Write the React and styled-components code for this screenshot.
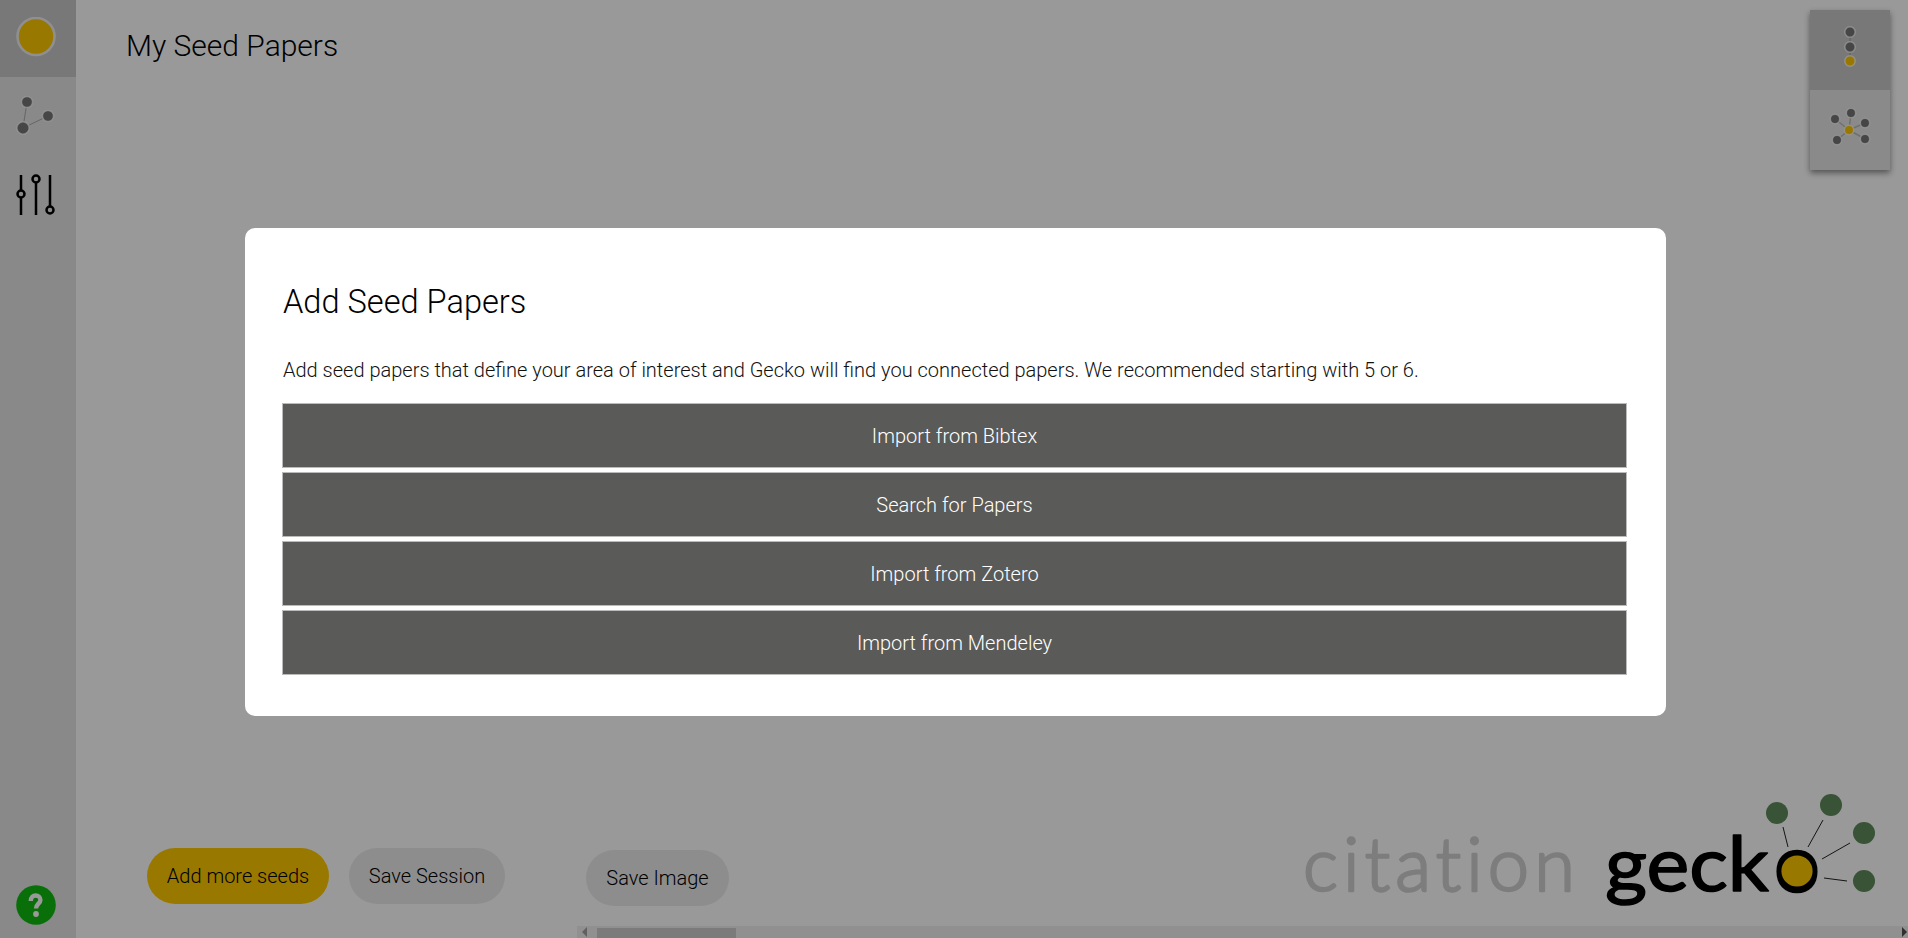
import styled, { createGlobalStyle } from 'styled-components'

const GlobalStyle = createGlobalStyle`
  html, body {
    margin: 0;
    height: 100%;
    overflow: hidden;
    font-family: Roboto, "Liberation Sans", sans-serif;
  }
  * { box-sizing: border-box; }
`

const Page = styled('div')`
  display: flex;
  width: 1908px;
  height: 938px;
  background: #fff;
`

const Sidebar = styled('nav')`
  display: flex;
  flex-direction: column;
  align-items: stretch;
  flex: 0 0 76px;
  background: #e4e4e4;
`

const NavItem = styled('div')`
  display: flex;
  align-items: center;
  justify-content: center;
  height: ${({ height = 77 }) => height}px;
  background: ${({ active }) => (active ? '#c8c8c8' : 'transparent')};
`

const HelpSlot = styled('div')`
  display: flex;
  justify-content: center;
  margin-top: auto;
  padding: 0 5px 13px 0;
`

const SeedPanel = styled('section')`
  display: flex;
  flex-direction: column;
  flex: 0 0 501px;
  padding: 27px 0 34px 50px;
`

const PageTitle = styled('h1')`
  margin: 0;
  font-size: 30px;
  line-height: 38px;
  font-weight: 300;
  color: #000;
`

const ButtonRow = styled('div')`
  display: flex;
  gap: 20px;
  margin-top: auto;
  margin-left: 21px;
`

const Pill = styled('div')`
  display: flex;
  align-items: center;
  justify-content: center;
  height: 56px;
  width: ${({ width }) => width}px;
  border-radius: 28px;
  font-size: 20px;
  font-weight: 300;
  color: #000;
  background: ${({ primary }) => (primary ? '#ffc800' : '#ececec')};
`

const GraphPanel = styled('section')`
  position: relative;
  display: flex;
  flex-direction: column;
  flex: 1;
`

const GraphBody = styled('div')`
  flex: 1;
  display: flex;
  align-items: flex-end;
  padding: 0 0 20px 9px;
`

const Scrollbar = styled('div')`
  display: flex;
  align-items: center;
  height: 12px;
  background: #f0f0f0;
`

const ScrollArrow = styled('div')`
  width: 0;
  height: 0;
  margin-left: ${({ right }) => (right ? 'auto' : '5px')};
  margin-right: ${({ right }) => (right ? '1px' : '0')};
  border-top: 5px solid transparent;
  border-bottom: 5px solid transparent;
  ${({ right }) => (right ? 'border-left: 5px solid #505050;' : 'border-right: 5px solid #a0a0a0;')}
`

const ScrollThumb = styled('div')`
  width: 139px;
  height: 10px;
  margin: 2px 0 0 10px;
  background: #cdcdcd;
`

const ViewToggle = styled('div')`
  position: absolute;
  top: 10px;
  right: 18px;
  display: flex;
  flex-direction: column;
  width: 80px;
  box-shadow: 0 3px 6px rgba(0, 0, 0, 0.45);
`

const ToggleItem = styled('div')`
  display: flex;
  align-items: center;
  justify-content: center;
  height: 80px;
  background: ${({ active }) => (active ? '#c8c8c8' : '#e6e6e6')};
`

const Logo = styled('svg')`
  position: absolute;
  right: 0;
  bottom: 12px;
  display: block;
  font-variant-ligatures: none;
`

const Overlay = styled('div')`
  position: fixed;
  inset: 0;
  padding: 228px 0 0 245px;
  background: rgba(0, 0, 0, 0.4);
`

const Modal = styled('div')`
  width: 1421px;
  height: 488px;
  padding: 54px 39px 0 38px;
  border-radius: 10px;
  background: #fff;
`

const ModalTitle = styled('h2')`
  margin: 0;
  font-size: 32.6px;
  line-height: 40px;
  font-weight: 300;
  color: #000;
`

const ModalText = styled('p')`
  margin: 34px 0 0;
  font-size: 20px;
  line-height: 28px;
  font-weight: 300;
  color: #111;
`

const ImportList = styled('div')`
  display: flex;
  flex-direction: column;
  gap: 4px;
  margin: 19px 0 0 -1px;
`

const ImportButton = styled('div')`
  display: flex;
  align-items: center;
  justify-content: center;
  height: 65px;
  background: #5a5a58;
  border: 1px solid #bbb;
  font-size: 20px;
  font-weight: 300;
  color: #fff;
`

const Node = ({ x, y, r = 5, fill = '#757575', ring = '#fff' }) => (
  <circle cx={x} cy={y} r={r} fill={fill} stroke={ring} strokeOpacity='0.75' strokeWidth='1.5' />
)

const SeedDot = () => (
  <svg width='44' height='44' viewBox='0 0 44 44'>
    <circle cx='20' cy='19.5' r='18.5' fill='#ffc800' stroke='#efefef' strokeWidth='2.6' />
  </svg>
)

const NetworkIcon = () => (
  <svg width='44' height='50' viewBox='0 0 44 50'>
    <path d='M11 13 L7 39 M7 39 L32 27' stroke='#aaa' strokeWidth='1' fill='none' />
    <Node x={11} y={13} r={5.6} />
    <Node x={32} y={27} r={5.6} />
    <Node x={7} y={39} r={6.2} />
  </svg>
)

const SlidersIcon = () => (
  <svg width='44' height='50' viewBox='0 0 44 50' fill='none' stroke='#000' strokeWidth='2.5'>
    <path d='M5 5V20M5 28V45M20 13V45M34 5V36' />
    <circle cx='5' cy='24' r='3.5' />
    <circle cx='20' cy='9' r='3.5' />
    <circle cx='34' cy='40' r='3.5' />
  </svg>
)

const HelpIcon = () => (
  <svg width='40' height='40' viewBox='0 0 40 40'>
    <circle cx='20' cy='20' r='19.8' fill='#10ba10' />
    <path d='M14.8 16 C14.8 12 17 10.5 19.6 10.5 C22.5 10.5 24.4 12.5 24.4 15 C24.4 18.5 20 19 20 23.5' fill='none' stroke='#fff' strokeWidth='4.4' />
    <circle cx='20' cy='29' r='2.9' fill='#fff' />
  </svg>
)

const ChainIcon = () => (
  <svg width='24' height='50' viewBox='0 0 24 50'>
    <path d='M12 8V39' stroke='#aaa' strokeWidth='1.5' />
    <Node x={12} y={7} r={5.2} />
    <Node x={12} y={22} r={5.2} />
    <Node x={12} y={36} r={5.2} fill='#ffc800' />
  </svg>
)

const SATELLITES = [[7, 11], [23, 5], [37, 15], [37, 31], [9, 32]]

const StarIcon = () => (
  <svg width='44' height='44' viewBox='0 0 44 44'>
    {SATELLITES.map(([x, y]) => (
      <line key={y} x1={21} y1={22} x2={x} y2={y} stroke='#bbb' strokeWidth='1.5' />
    ))}
    {SATELLITES.map(([x, y]) => <Node key={y} x={x} y={y} r={4.7} />)}
    <Node x={21} y={22} r={4.7} fill='#ffc800' />
  </svg>
)

const LOGO_LINES = [
  [480, 27, 485, 47],
  [520, 20, 505, 47],
  [547, 43, 519, 59],
  [521, 78, 544, 81],
]

const LOGO_NODES = [
  [474, 13],
  [528, 5],
  [561, 33],
  [561, 81],
]

const LogoWord = styled('text')`
  font-family: Lato, sans-serif;
  font-size: ${({ size = 74 }) => size}px;
  stroke-linejoin: round;
  stroke-linecap: round;
`

const CitationLogo = () => (
  <Logo width='605' height='132' viewBox='0 -6 605 132'>
    <LogoWord
      x='0'
      y='91'
      fontWeight='300'
      fill='#d0d0d0'
      stroke='#d0d0d0'
      strokeWidth='2.5'
      textLength='272'
      lengthAdjust='spacing'
    >
      citation
    </LogoWord>
    <LogoWord
      x='302'
      y='91'
      size={76}
      fontWeight='400'
      fill='#000'
      stroke='#000'
      strokeWidth='1.5'
      textLength='164'
      lengthAdjust='spacingAndGlyphs'
    >
      geck
    </LogoWord>
    <LogoWord x='494' y='92' size={82} fontWeight='400' textAnchor='middle' fill='#000' stroke='#000' strokeWidth='1.5'>
      o
    </LogoWord>
    <circle cx='494' cy='71' r='15.6' fill='#ffc800' />
    {LOGO_LINES.map(([x1, y1, x2, y2]) => (
      <line key={x1} x1={x1} y1={y1} x2={x2} y2={y2} stroke='#222' strokeWidth='1' />
    ))}
    {LOGO_NODES.map(([cx, cy]) => (
      <circle key={cy} cx={cx} cy={cy} r='11' fill='#5f8a5c' />
    ))}
  </Logo>
)

const IMPORTS = ['Import from Bibtex', 'Search for Papers', 'Import from Zotero', 'Import from Mendeley']

const App = () => (
  <>
    <GlobalStyle />
    <Page>
      <Sidebar>
        <NavItem active><SeedDot /></NavItem>
        <NavItem height={74}><NetworkIcon /></NavItem>
        <NavItem height={88}><SlidersIcon /></NavItem>
        <HelpSlot><HelpIcon /></HelpSlot>
      </Sidebar>
      <SeedPanel>
        <PageTitle>My Seed Papers</PageTitle>
        <ButtonRow>
          <Pill primary width={182}>Add more seeds</Pill>
          <Pill width={156}>Save Session</Pill>
        </ButtonRow>
      </SeedPanel>
      <GraphPanel>
        <ViewToggle>
          <ToggleItem active><ChainIcon /></ToggleItem>
          <ToggleItem><StarIcon /></ToggleItem>
        </ViewToggle>
        <GraphBody>
          <Pill width={143}>Save Image</Pill>
        </GraphBody>
        <CitationLogo />
        <Scrollbar>
          <ScrollArrow />
          <ScrollThumb />
          <ScrollArrow right />
        </Scrollbar>
      </GraphPanel>
    </Page>
    <Overlay>
      <Modal>
        <ModalTitle>Add Seed Papers</ModalTitle>
        <ModalText>
          Add seed papers that define your area of interest and Gecko will find you connected papers. We recommended starting with 5 or 6.
        </ModalText>
        <ImportList>
          {IMPORTS.map(label => <ImportButton key={label}>{label}</ImportButton>)}
        </ImportList>
      </Modal>
    </Overlay>
  </>
)

export default App
